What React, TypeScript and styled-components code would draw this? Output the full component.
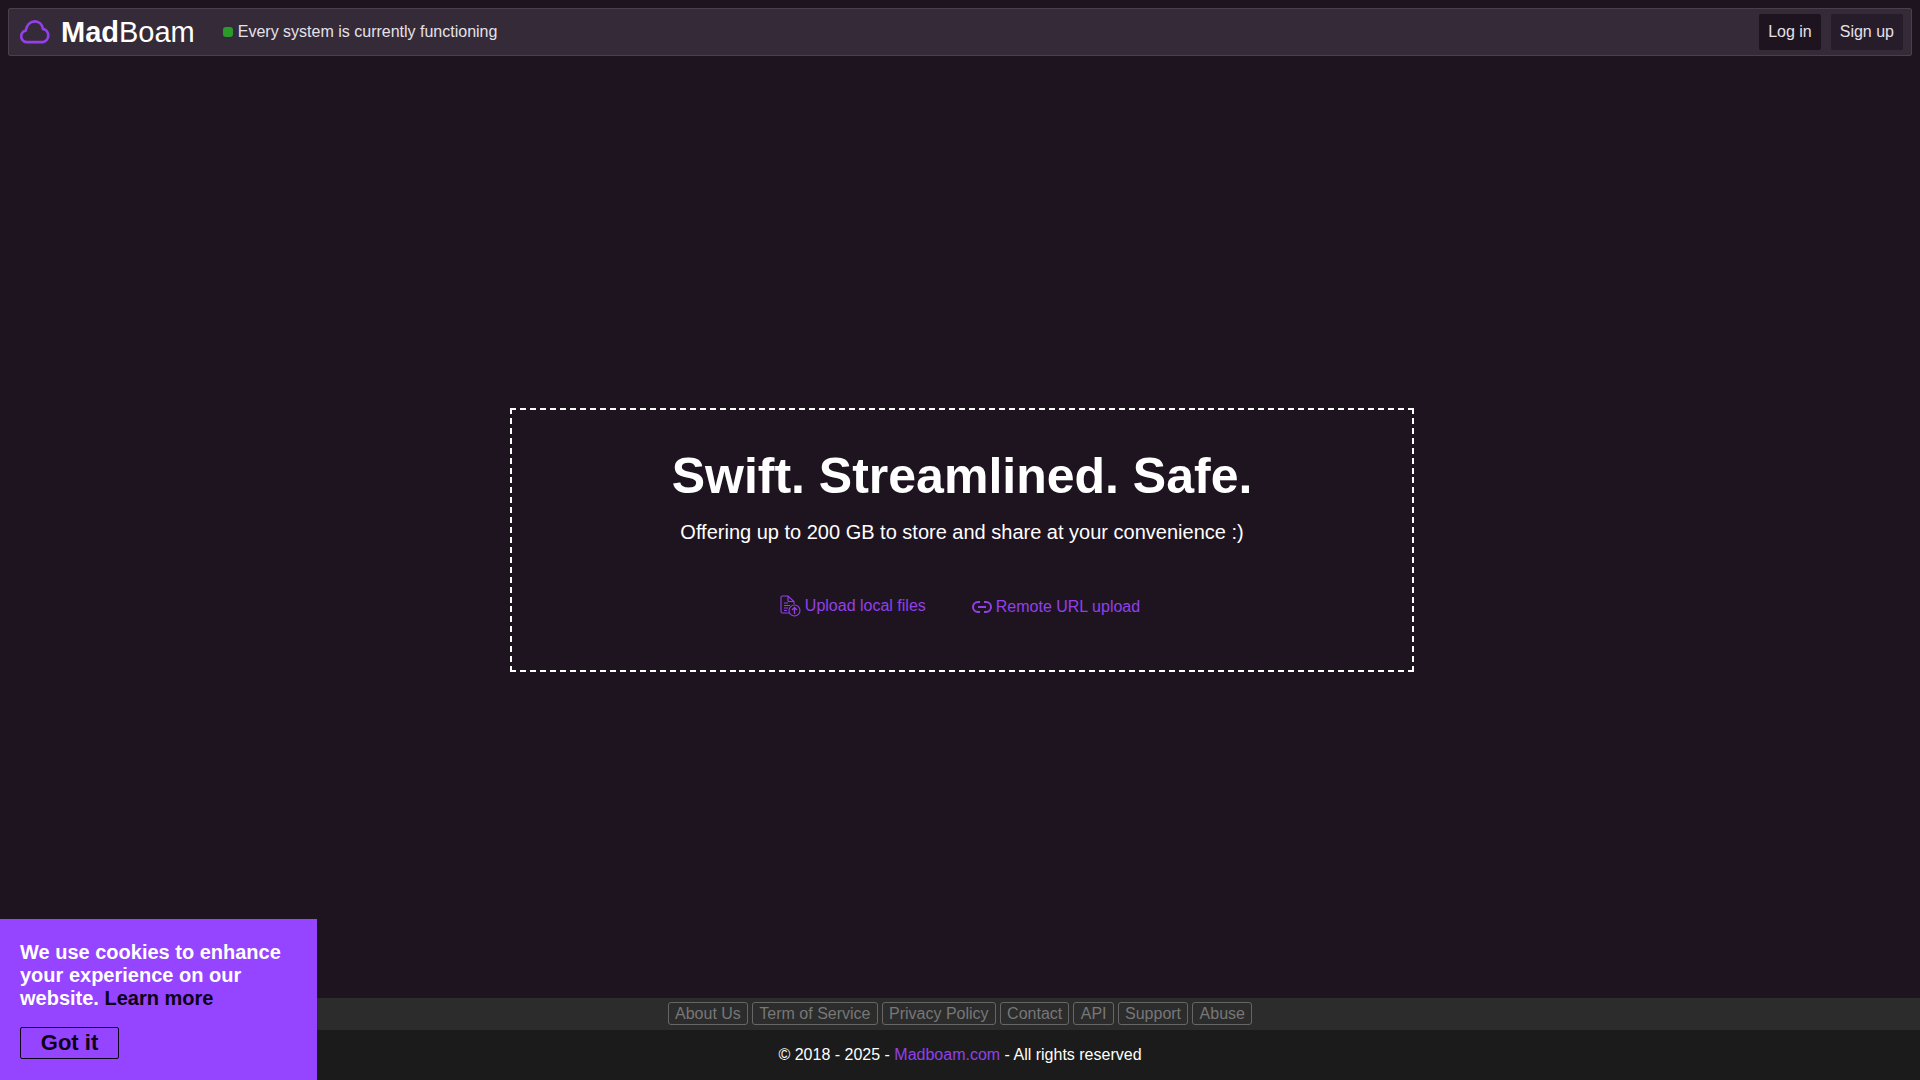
import React from "react";
import styled, {createGlobalStyle} from "styled-components";

const GlobalStyle = createGlobalStyle`
  html, body {
    margin: 0;
    padding: 0;
    background: #1e1420;
  }
  body {
    font-family: "Liberation Sans", Arial, sans-serif;
    font-size: 16px;
    color: #fff;
  }
  a {
    text-decoration: none;
  }
`;

const Page = styled.div`
  display: flex;
  flex-direction: column;
  height: 1080px;
  overflow: hidden;
`;

const Navbar = styled.nav`
  display: flex;
  align-items: center;
  justify-content: space-between;
  height: 46px;
  margin: 8px 8px 0;
  padding: 0 8px 0 11px;
  background: #352a38;
  border: 1px solid #4a3f4d;
  border-radius: 2px;
`;

const NavLeft = styled.div`
  display: flex;
  align-items: center;
`;

const Brand = styled.a`
  display: flex;
  align-items: center;
  gap: 11px;
  color: #fff;
  font-size: 29px;
  line-height: 1;
`;

const Status = styled.span`
  display: flex;
  align-items: center;
  gap: 5px;
  margin-left: 28px;
  color: #e6e1e8;
  font-size: 16px;
`;

const StatusDot = styled.i`
  width: 10px;
  height: 10px;
  border-radius: 3px;
  background: #2b9a2b;
`;

const NavButtons = styled.div`
  display: flex;
  gap: 10px;
`;

const NavButton = styled.a<{$dark?: boolean}>`
  padding: 9px 9px;
  height: 18px;
  line-height: 18px;
  border-radius: 2px;
  color: #e6e1e8;
  background: ${p => (p.$dark ? "#1e1420" : "#271c2a")};
`;

const Main = styled.main`
  flex: 1;
  display: flex;
  align-items: center;
  justify-content: center;
  padding: 26px 0 0 4px;
`;

// the dashes are 6px on, 4px off and end on a dash at each corner
const DropZone = styled.section`
  box-sizing: border-box;
  width: 904px;
  height: 264px;
  padding-top: 38px;
  text-align: center;
  background-image:
    repeating-linear-gradient(90deg, #fff 0 6px, transparent 6px 9.978px),
    repeating-linear-gradient(90deg, #fff 0 6px, transparent 6px 9.978px),
    repeating-linear-gradient(180deg, #fff 0 6px, transparent 6px 9.923px),
    repeating-linear-gradient(180deg, #fff 0 6px, transparent 6px 9.923px);
  background-size: 100% 2px, 100% 2px, 2px 100%, 2px 100%;
  background-position: top left, bottom left, top left, top right;
  background-repeat: no-repeat;
`;

const Title = styled.h1`
  margin: 0;
  font-size: 50px;
  line-height: 60px;
  font-weight: 700;
`;

const Subtitle = styled.p`
  margin: 14px 0 0;
  font-size: 20px;
  line-height: 24px;
`;

const UploadOptions = styled.div`
  display: flex;
  align-items: flex-start;
  justify-content: center;
  gap: 46px;
  margin-top: 49px;
  padding-right: 4px;
`;

const UploadOption = styled.a<{$tall?: boolean}>`
  display: flex;
  align-items: center;
  gap: 4px;
  height: ${p => (p.$tall ? "28px" : "26px")};
  color: #9340ea;
  font-size: 16px;
`;

const LinksBar = styled.div`
  box-sizing: border-box;
  display: flex;
  justify-content: center;
  align-items: center;
  gap: 4px;
  height: 32px;
  padding-bottom: 2px;
  background: #2c2c2c;
`;

const FooterLink = styled.a`
  padding: 0 6.250px;
  height: 21px;
  line-height: 21px;
  border: 1px solid #666;
  border-radius: 3px;
  color: #777;
  font-size: 16px;
`;

const Copyright = styled.footer`
  height: 50px;
  line-height: 50px;
  background: #1b1b1b;
  text-align: center;
  font-size: 16px;
`;

const BrandLink = styled.a`
  color: #9340ea;
`;

const CookieBox = styled.aside`
  position: fixed;
  left: 0;
  bottom: 0;
  box-sizing: border-box;
  width: 317px;
  height: 161px;
  padding: 22px 20px;
  background: #9544ff;
  font-size: 20px;
  line-height: 23px;
  font-weight: 700;
`;

const LearnMore = styled.a`
  color: #0d0014;
`;

const GotIt = styled.button`
  display: block;
  box-sizing: border-box;
  width: 99px;
  height: 32px;
  margin-top: 17px;
  padding: 0;
  background: transparent;
  border: 1px solid #0d0014;
  border-radius: 2px;
  color: #0d0014;
  font: 700 22px "Liberation Sans", Arial, sans-serif;
`;

function CloudIcon() {
  return (
    <svg width="30" height="24" viewBox="0 0 30 24" fill="none" stroke="#9340ea" strokeWidth="2.700">
      <path d="M7 22.200A5.900 5.900 0 0 1 5.600 10.600C6.600 5.200 10.300 1.400 15 1.400C19 1.400 22.200 4.600 23 8.900A6.800 6.800 0 0 1 22.800 22.200Z" />
    </svg>
  );
}

function FileUploadIcon() {
  return (
    <svg width="21" height="23" viewBox="0 0 21 23" fill="none" stroke="#9340ea" strokeWidth="1.100">
      <path d="M9 18H2.500A1.500 1.500 0 0 1 1 16.500V2.500A1.500 1.500 0 0 1 2.500 1H8l6 5.500V9" />
      <path d="M8 1v4.500A1 1 0 0 0 9 6.500h5" />
      <path d="M4 8h4M4 10.500h6M4 13h4M4 15.500h3" />
      <circle cx="14.500" cy="15.500" r="5.500" />
      <path d="M14.500 19v-6.500M12 15l2.500-2.500L17 15" strokeWidth="1.300" />
    </svg>
  );
}

function LinkIcon() {
  return (
    <svg width="20" height="13" viewBox="0 0 20 13" fill="none" stroke="#9340ea" strokeWidth="2">
      <path d="M8 1H6a5 5 0 0 0 0 10H8" />
      <path d="M12 1h2a5 5 0 0 1 0 10H12" />
      <path d="M6 6h8" />
    </svg>
  );
}

const footerLinks = ["About Us", "Term of Service", "Privacy Policy", "Contact", "API", "Support", "Abuse"];

function App() {
  return (
    <Page>
      <GlobalStyle />
      <Navbar>
        <NavLeft>
          <Brand href="#">
            <CloudIcon />
            <span>
              <b>Mad</b>Boam
            </span>
          </Brand>
          <Status>
            <StatusDot />
            Every system is currently functioning
          </Status>
        </NavLeft>
        <NavButtons>
          <NavButton href="#" $dark>
            Log in
          </NavButton>
          <NavButton href="#">Sign up</NavButton>
        </NavButtons>
      </Navbar>
      <Main>
        <DropZone>
          <Title>Swift. Streamlined. Safe.</Title>
          <Subtitle>Offering up to 200 GB to store and share at your convenience :)</Subtitle>
          <UploadOptions>
            <UploadOption href="#">
              <FileUploadIcon />
              Upload local files
            </UploadOption>
            <UploadOption href="#" $tall>
              <LinkIcon />
              Remote URL upload
            </UploadOption>
          </UploadOptions>
        </DropZone>
      </Main>
      <LinksBar>
        {footerLinks.map(l => (
          <FooterLink href="#" key={l}>
            {l}
          </FooterLink>
        ))}
      </LinksBar>
      <Copyright>
        © 2018 - 2025 - <BrandLink href="#">Madboam.com</BrandLink> - All rights reserved
      </Copyright>
      <CookieBox>
        We use cookies to enhance your experience on our website. <LearnMore href="#">Learn more</LearnMore>
        <GotIt>Got it</GotIt>
      </CookieBox>
    </Page>
  );
}

export default App;
